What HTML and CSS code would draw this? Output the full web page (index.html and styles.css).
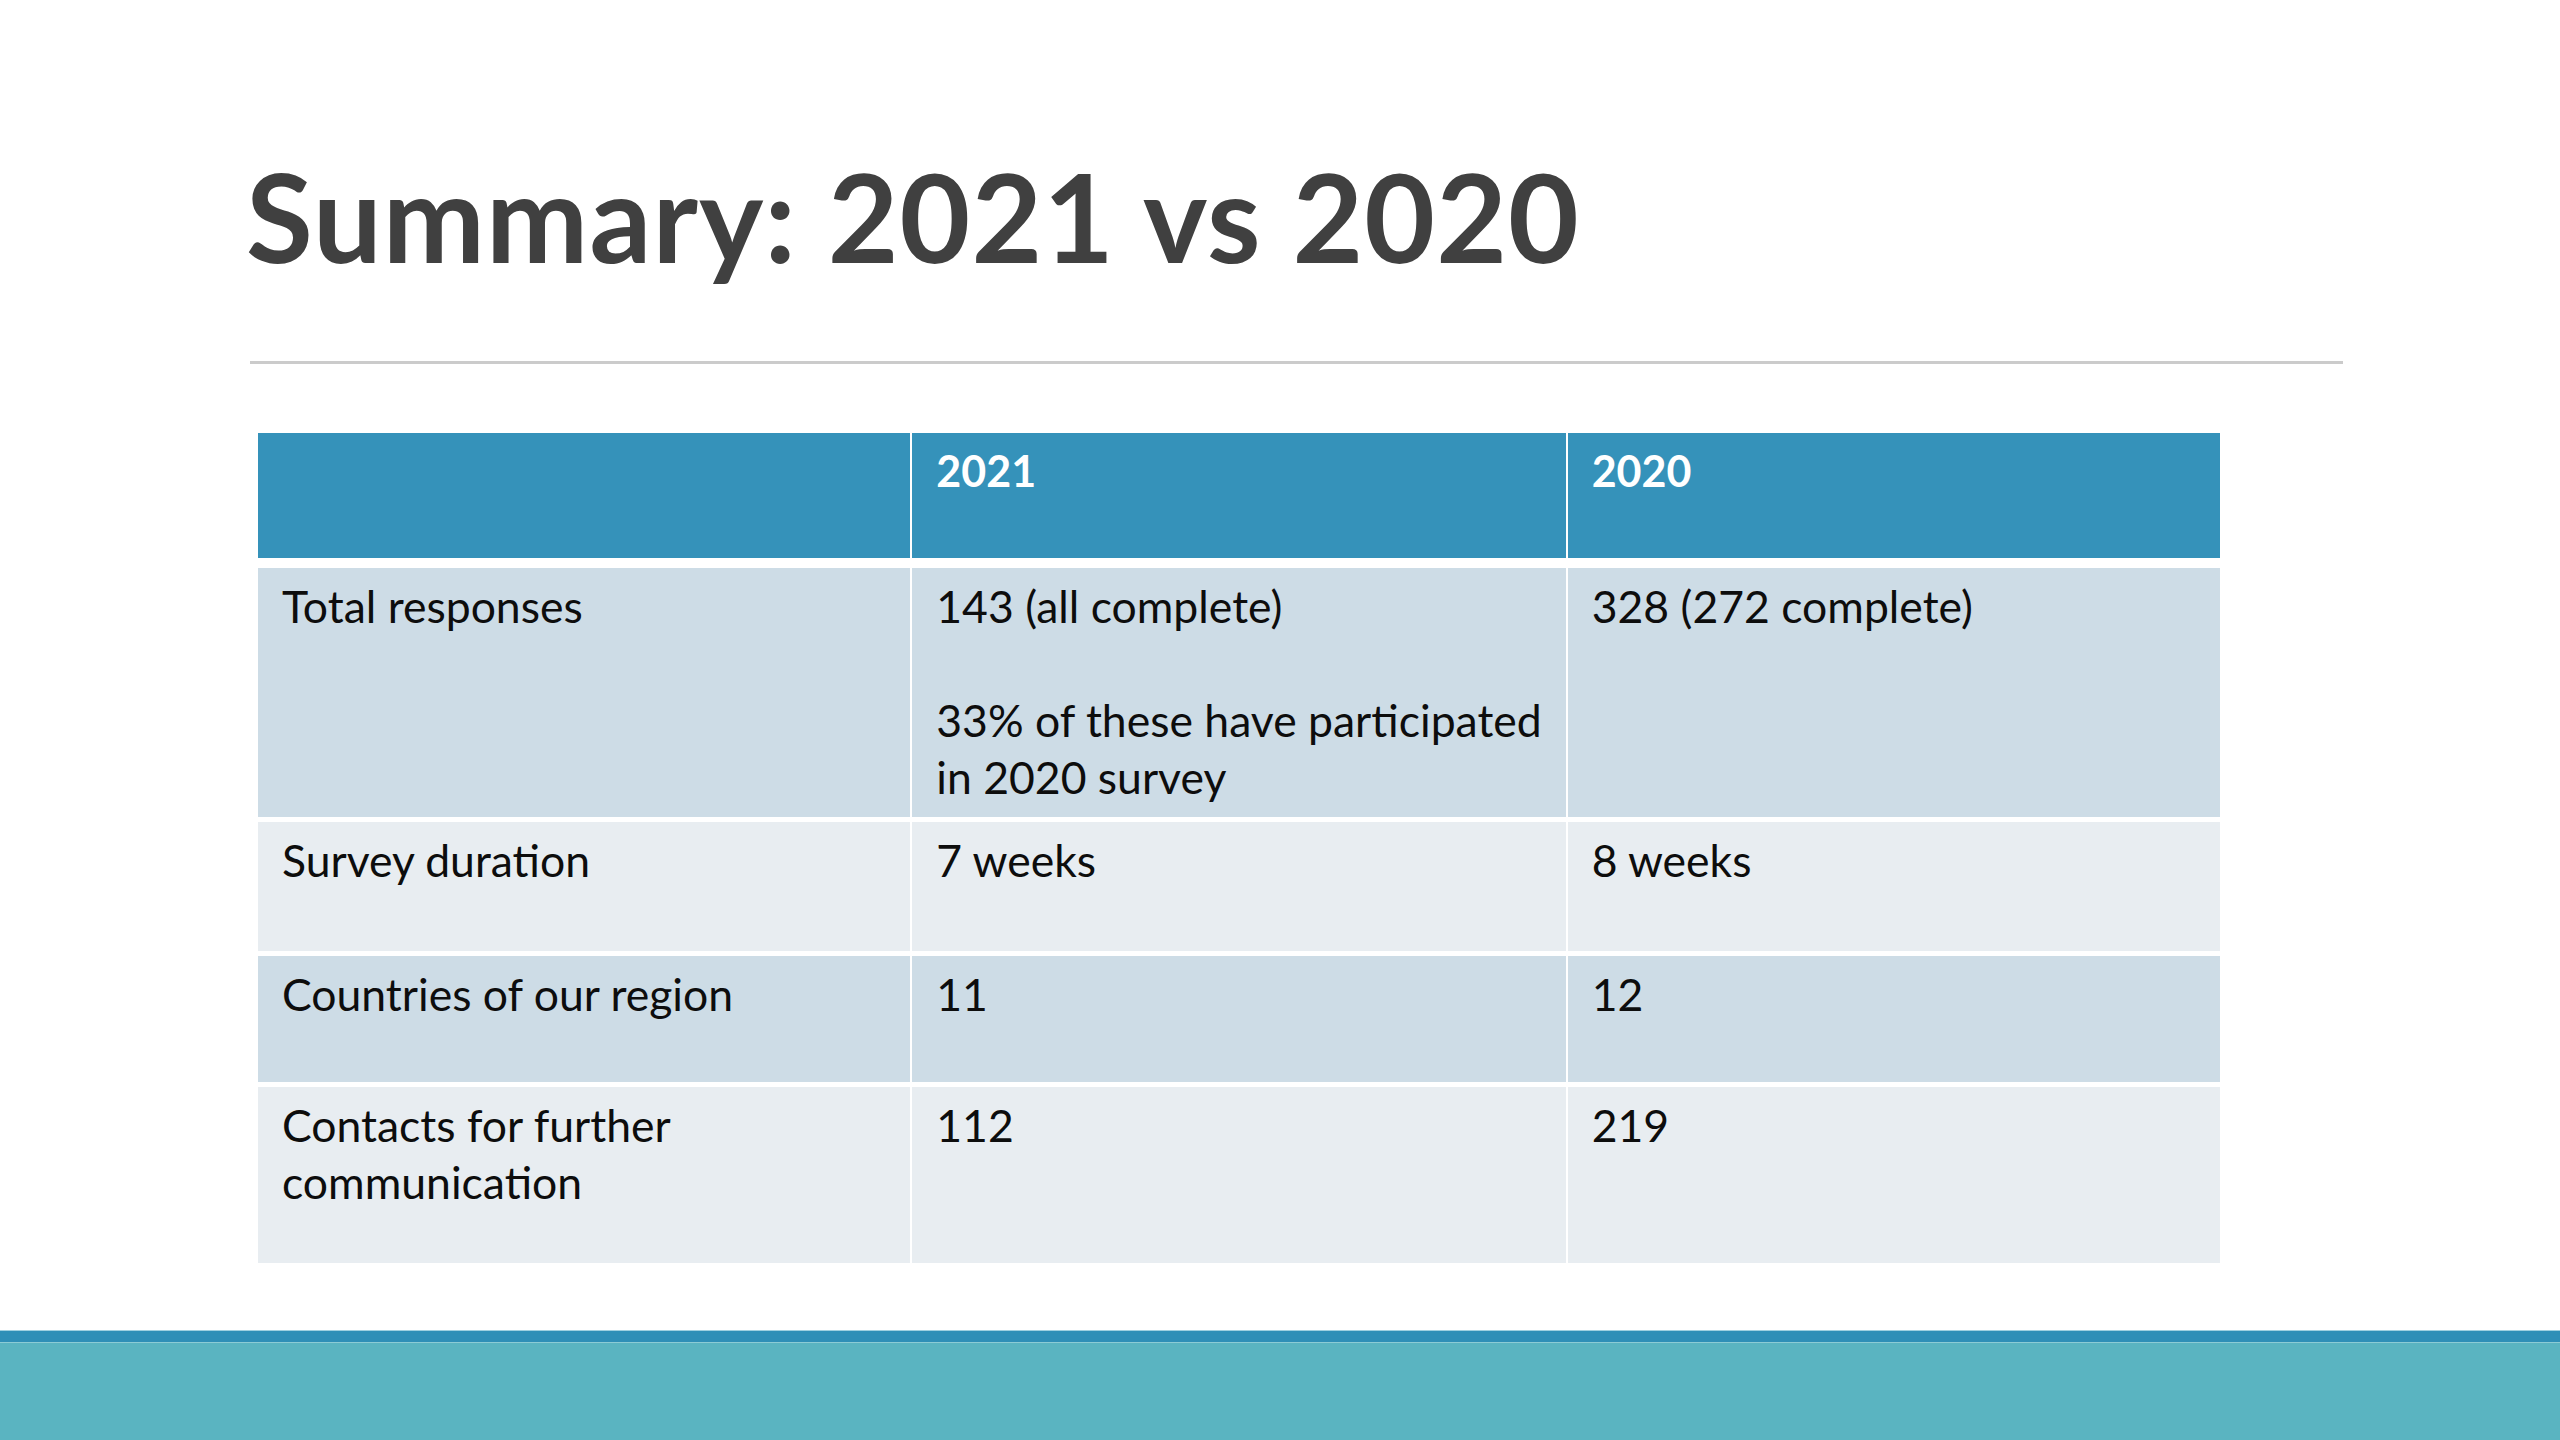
FILE: index.html
```html
<!DOCTYPE html>
<html lang="en">
<head>
<meta charset="utf-8">
<title>Summary: 2021 vs 2020</title>
<link rel="stylesheet" href="styles.css">
</head>
<body>
<div class="slide">
  <h1 class="title">Summary: 2021 vs 2020</h1>
  <div class="rule"></div>
  <div class="table" role="table">
    <div class="cell head" role="columnheader"></div>
    <div class="cell head" role="columnheader">2021</div>
    <div class="cell head" role="columnheader">2020</div>

    <div class="cell odd" role="cell">Total responses</div>
    <div class="cell odd" role="cell">143 (all complete)<br><br>33% of these have participated<br>in 2020 survey</div>
    <div class="cell odd" role="cell">328 (272 complete)</div>

    <div class="cell even" role="cell">Survey duration</div>
    <div class="cell even" role="cell">7 weeks</div>
    <div class="cell even" role="cell">8 weeks</div>

    <div class="cell odd" role="cell">Countries of our region</div>
    <div class="cell odd" role="cell">11</div>
    <div class="cell odd" role="cell">12</div>

    <div class="cell even" role="cell">Contacts for further<br>communication</div>
    <div class="cell even" role="cell">112</div>
    <div class="cell even" role="cell">219</div>
  </div>
  <footer class="band">
    <div class="band-stripe"></div>
    <div class="band-fill"></div>
  </footer>
</div>
</body>
</html>
```

FILE: styles.css
```css
html, body {
  margin: 0;
  padding: 0;
  background: #ffffff;
}

.slide {
  width: 2560px;
  height: 1440px;
  display: flex;
  flex-direction: column;
  font-family: Lato, "Open Sans", "Liberation Sans", sans-serif;
  overflow: hidden;
}

.title {
  margin: 143px 0 0 246px;
  font-family: Lato, "Liberation Sans", sans-serif;
  font-weight: 700;
  font-size: 122px;
  letter-spacing: 1.1px;
  line-height: 1.2;
  color: #404040;
  white-space: nowrap;
}

.rule {
  margin: 72px 0 0 250px;
  width: 2093px;
  height: 3px;
  background: #cbcbcb;
}

.table {
  margin: 69px 0 0 258px;
  width: 1962px;
  display: grid;
  grid-template-columns: repeat(3, 1fr);
  grid-template-rows: 130px 249px 129px 126px 176px;
  column-gap: 2px;
  row-gap: 5px;
}

.cell {
  box-sizing: border-box;
  padding: 9px 24px 0 24px;
  font-size: 44.5px;
  line-height: 57px;
  color: #0d0d0d;
  white-space: nowrap;
}

.head {
  background: #3592ba;
  color: #ffffff;
  font-weight: 700;
  font-size: 43px;
  margin-bottom: 5px;
}

.odd {
  background: #cddce6;
}

.even {
  background: #e8edf1;
}

.band {
  margin-top: auto;
  display: flex;
  flex-direction: column;
}

.band-stripe {
  height: 11px;
  background: #2f8fb7;
  border-top: 1px solid #9fd0e0;
}

.band-fill {
  height: 97px;
  background: #5ab4c1;
  border-top: 1px solid #8ccbd5;
}
```
